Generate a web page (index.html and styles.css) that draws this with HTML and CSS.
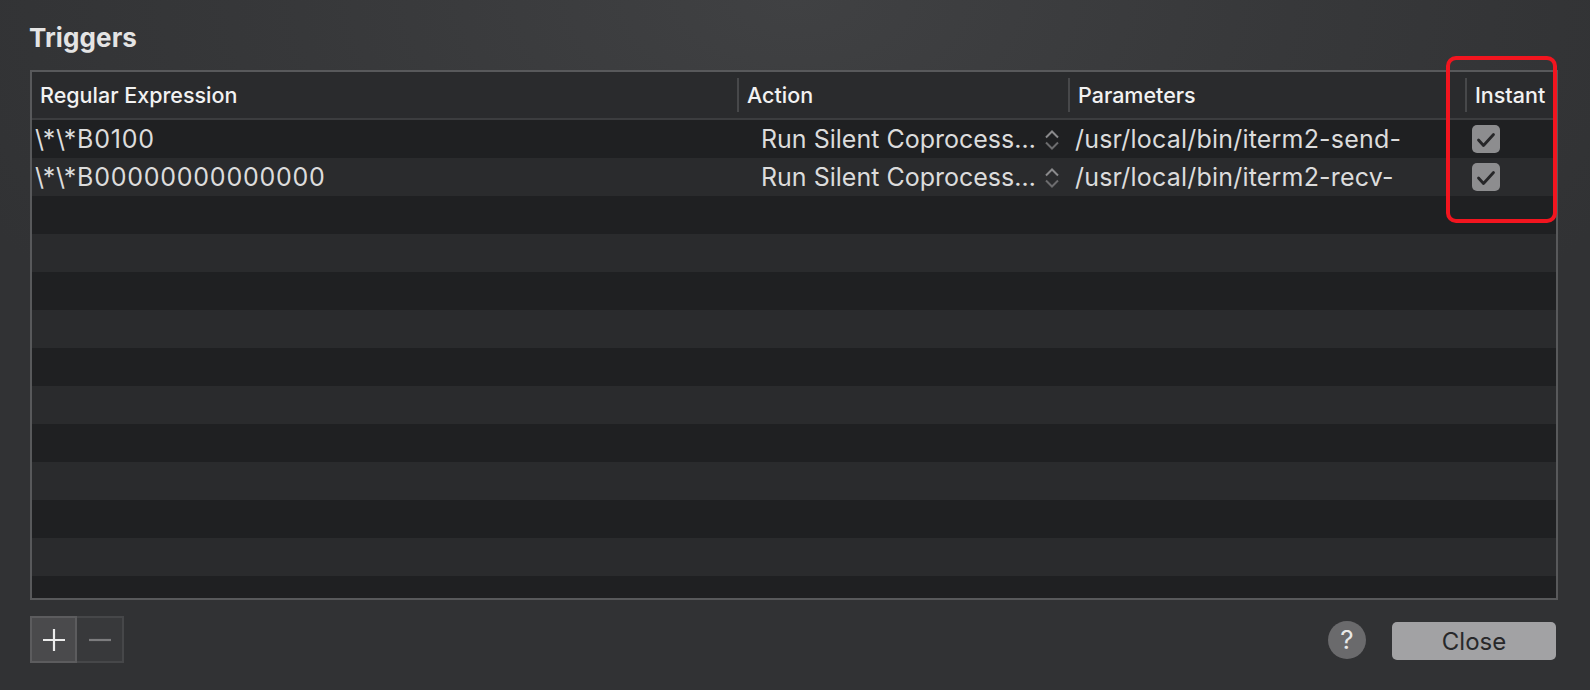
FILE: index.html
```html
<!DOCTYPE html>
<html lang="en">
<head>
<meta charset="utf-8">
<title>Triggers</title>
<link rel="stylesheet" href="styles.css">
</head>
<body>
<div class="window">
  <h1 class="title">Triggers</h1>
  <div class="table">
    <div class="thead">
      <div class="th th-first">Regular Expression</div>
      <div class="th">Action</div>
      <div class="th">Parameters</div>
      <div class="th">Instant</div>
    </div>
    <div class="tbody">
      <div class="tr">
        <div class="td td-regex">\*\*B0100</div>
        <div class="td td-action"><span class="popup-text">Run Silent Coprocess…</span>
          <svg class="chev" width="16" height="20" viewBox="0 0 16 20"><path d="M2 7.5 L8 1.5 L14 7.5" fill="none" stroke="#8a8a8c" stroke-width="2"/><path d="M2 12.5 L8 18.5 L14 12.5" fill="none" stroke="#6c6c6e" stroke-width="2"/></svg>
        </div>
        <div class="td td-param">/usr/local/bin/iterm2-send-</div>
        <div class="td td-check"><svg width="28" height="28" viewBox="0 0 28 28"><rect x="0" y="0" width="28" height="28" rx="5" fill="#8d8d8f"/><path d="M6.5 15 L11.5 20.5 L21.5 9.5" fill="none" stroke="#262628" stroke-width="2.8" stroke-linecap="round" stroke-linejoin="round"/></svg></div>
      </div>
      <div class="tr">
        <div class="td td-regex">\*\*B00000000000000</div>
        <div class="td td-action"><span class="popup-text">Run Silent Coprocess…</span>
          <svg class="chev" width="16" height="20" viewBox="0 0 16 20"><path d="M2 7.5 L8 1.5 L14 7.5" fill="none" stroke="#8a8a8c" stroke-width="2"/><path d="M2 12.5 L8 18.5 L14 12.5" fill="none" stroke="#6c6c6e" stroke-width="2"/></svg>
        </div>
        <div class="td td-param">/usr/local/bin/iterm2-recv-</div>
        <div class="td td-check"><svg width="28" height="28" viewBox="0 0 28 28"><rect x="0" y="0" width="28" height="28" rx="5" fill="#8d8d8f"/><path d="M6.5 15 L11.5 20.5 L21.5 9.5" fill="none" stroke="#262628" stroke-width="2.8" stroke-linecap="round" stroke-linejoin="round"/></svg></div>
      </div>
    </div>
  </div>
  <div class="footer">
    <div class="segmented">
      <button class="seg seg-add" aria-label="Add"><svg width="24" height="24" viewBox="0 0 24 24"><path d="M12 1 V23 M1 12 H23" stroke="#ececec" stroke-width="2.2"/></svg></button>
      <button class="seg seg-remove" aria-label="Remove"><svg width="24" height="24" viewBox="0 0 24 24"><path d="M1 12 H23" stroke="#7c7c7e" stroke-width="2.2"/></svg></button>
    </div>
    <div class="spacer"></div>
    <button class="help">?</button>
    <button class="close">Close</button>
  </div>
  <div class="highlight"></div>
</div>
</body>
</html>
```

FILE: styles.css
```css
html, body {
  margin: 0;
  padding: 0;
}
body {
  width: 1590px;
  height: 690px;
  overflow: hidden;
  font-family: Inter, "Liberation Sans", sans-serif;
  background: radial-gradient(ellipse 900px 500px at 50% 0%, #404143 0%, #37383a 55%, #313234 100%);
}
.window {
  position: relative;
  height: 690px;
  box-sizing: border-box;
  padding: 22px 32px 0 30px;
}
.title {
  margin: 0 0 16px -1px;
  font-size: 26px;
  line-height: 32px;
  font-weight: 700;
  color: #e4e4e4;
  letter-spacing: 0.1px;
}
.table {
  border: 2px solid #58595b;
  background: #1f2022;
}
.thead {
  display: grid;
  grid-template-columns: 705px 331px 397px 91px;
  background: #2a2b2d;
  padding: 6px 0;
  border-bottom: 2px solid #3c3d3f;
}
.th {
  height: 34px;
  display: flex;
  align-items: center;
  border-left: 2px solid #47484a;
  padding-left: 8px;
  font-size: 21.5px;
  font-weight: 500;
  color: #f2f2f2;
  white-space: nowrap;
}
.th-first {
  border-left: none;
  padding-left: 8px;
}
.tbody {
  height: 478px;
  background: repeating-linear-gradient(to bottom, #1f2022 0px, #1f2022 38px, #2a2b2d 38px, #2a2b2d 76px);
}
.tr {
  display: grid;
  grid-template-columns: 705px 331px 397px 91px;
  height: 38px;
}
.td {
  display: flex;
  align-items: center;
  font-size: 25px;
  color: #dcdcdc;
  white-space: nowrap;
  overflow: hidden;
}
.td-regex {
  padding-left: 3px;
  letter-spacing: 0.75px;
}
.td-action {
  padding-left: 24px;
  padding-right: 8px;
  justify-content: space-between;
}
.chev {
  flex: none;
  margin-top: 1px;
}
.td-param {
  padding-left: 7px;
  letter-spacing: 0.2px;
}
.td-check {
  padding-left: 7px;
}
.td-check svg {
  display: block;
}
.footer {
  display: flex;
  align-items: center;
  margin-top: 16px;
  padding-right: 2px;
}
.segmented {
  display: flex;
}
.seg {
  width: 47px;
  height: 47px;
  margin: 0;
  padding: 0;
  display: flex;
  align-items: center;
  justify-content: center;
  box-sizing: border-box;
}
.seg-add {
  background: #4a4a4c;
  border: 2px solid #5c5c5e;
}
.seg-remove {
  background: #38393b;
  border: 2px solid #464749;
  border-left: none;
}
.spacer {
  flex: 1;
}
.help {
  width: 38px;
  height: 38px;
  border-radius: 50%;
  border: none;
  padding: 0;
  background: #6a6a6c;
  color: #e8e8e8;
  font-family: Inter, "Liberation Sans", sans-serif;
  font-size: 26px;
  line-height: 38px;
  text-align: center;
  margin-right: 26px;
}
.close {
  width: 164px;
  height: 38px;
  margin-top: 3px;
  border: none;
  border-radius: 5px;
  background: #a2a2a4;
  color: #28282a;
  font-family: Inter, "Liberation Sans", sans-serif;
  font-size: 24px;
  padding: 0;
}
.highlight {
  position: absolute;
  left: 1446px;
  top: 56px;
  width: 111px;
  height: 167px;
  box-sizing: border-box;
  border: 4px solid #f2151f;
  border-radius: 10px;
}
```
